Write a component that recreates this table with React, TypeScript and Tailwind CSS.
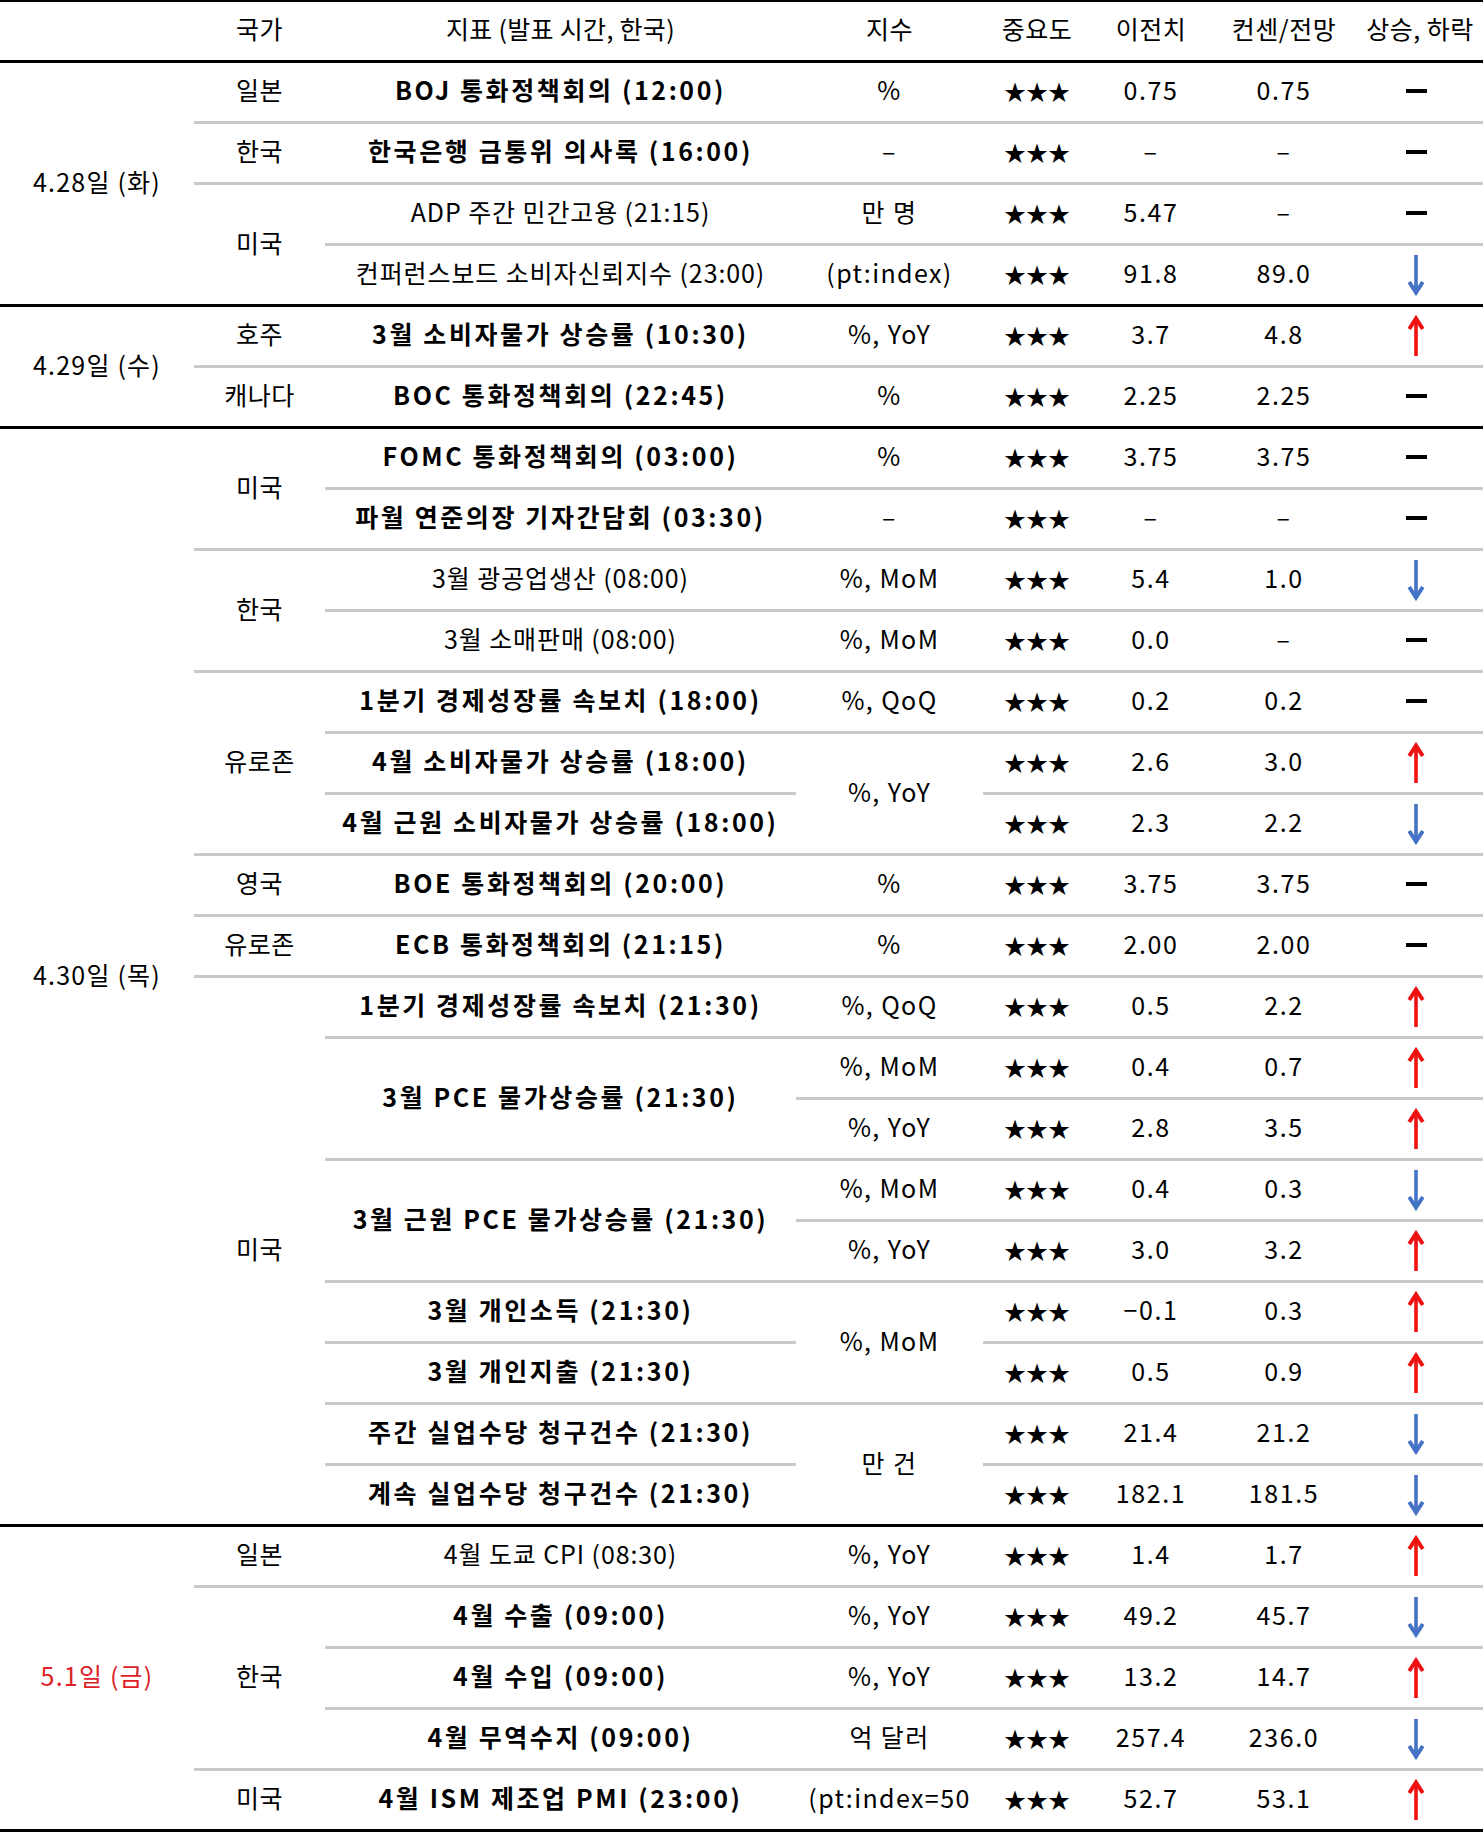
import React from "react";

type Trend = "up" | "down" | "flat";
type Row = {
  c?: [string, number];
  ind?: [string, number, boolean];
  idx?: [string, number];
  prev: string;
  cons: string;
  t: Trend;
};
type Group = { date: string; red?: boolean; rows: Row[] };

const groups: Group[] = [
  {
    date: "4.28일 (화)",
    rows: [
      { c: ["일본", 1], ind: ["BOJ 통화정책회의 (12:00)", 1, true], idx: ["%", 1], prev: "0.75", cons: "0.75", t: "flat" },
      { c: ["한국", 1], ind: ["한국은행 금통위 의사록 (16:00)", 1, true], idx: ["–", 1], prev: "–", cons: "–", t: "flat" },
      { c: ["미국", 2], ind: ["ADP 주간 민간고용 (21:15)", 1, false], idx: ["만 명", 1], prev: "5.47", cons: "–", t: "flat" },
      { ind: ["컨퍼런스보드 소비자신뢰지수 (23:00)", 1, false], idx: ["(pt:index)", 1], prev: "91.8", cons: "89.0", t: "down" },
    ],
  },
  {
    date: "4.29일 (수)",
    rows: [
      { c: ["호주", 1], ind: ["3월 소비자물가 상승률 (10:30)", 1, true], idx: ["%, YoY", 1], prev: "3.7", cons: "4.8", t: "up" },
      { c: ["캐나다", 1], ind: ["BOC 통화정책회의 (22:45)", 1, true], idx: ["%", 1], prev: "2.25", cons: "2.25", t: "flat" },
    ],
  },
  {
    date: "4.30일 (목)",
    rows: [
      { c: ["미국", 2], ind: ["FOMC 통화정책회의 (03:00)", 1, true], idx: ["%", 1], prev: "3.75", cons: "3.75", t: "flat" },
      { ind: ["파월 연준의장 기자간담회 (03:30)", 1, true], idx: ["–", 1], prev: "–", cons: "–", t: "flat" },
      { c: ["한국", 2], ind: ["3월 광공업생산 (08:00)", 1, false], idx: ["%, MoM", 1], prev: "5.4", cons: "1.0", t: "down" },
      { ind: ["3월 소매판매 (08:00)", 1, false], idx: ["%, MoM", 1], prev: "0.0", cons: "–", t: "flat" },
      { c: ["유로존", 3], ind: ["1분기 경제성장률 속보치 (18:00)", 1, true], idx: ["%, QoQ", 1], prev: "0.2", cons: "0.2", t: "flat" },
      { ind: ["4월 소비자물가 상승률 (18:00)", 1, true], idx: ["%, YoY", 2], prev: "2.6", cons: "3.0", t: "up" },
      { ind: ["4월 근원 소비자물가 상승률 (18:00)", 1, true], prev: "2.3", cons: "2.2", t: "down" },
      { c: ["영국", 1], ind: ["BOE 통화정책회의 (20:00)", 1, true], idx: ["%", 1], prev: "3.75", cons: "3.75", t: "flat" },
      { c: ["유로존", 1], ind: ["ECB 통화정책회의 (21:15)", 1, true], idx: ["%", 1], prev: "2.00", cons: "2.00", t: "flat" },
      { c: ["미국", 9], ind: ["1분기 경제성장률 속보치 (21:30)", 1, true], idx: ["%, QoQ", 1], prev: "0.5", cons: "2.2", t: "up" },
      { ind: ["3월 PCE 물가상승률 (21:30)", 2, true], idx: ["%, MoM", 1], prev: "0.4", cons: "0.7", t: "up" },
      { idx: ["%, YoY", 1], prev: "2.8", cons: "3.5", t: "up" },
      { ind: ["3월 근원 PCE 물가상승률 (21:30)", 2, true], idx: ["%, MoM", 1], prev: "0.4", cons: "0.3", t: "down" },
      { idx: ["%, YoY", 1], prev: "3.0", cons: "3.2", t: "up" },
      { ind: ["3월 개인소득 (21:30)", 1, true], idx: ["%, MoM", 2], prev: "−0.1", cons: "0.3", t: "up" },
      { ind: ["3월 개인지출 (21:30)", 1, true], prev: "0.5", cons: "0.9", t: "up" },
      { ind: ["주간 실업수당 청구건수 (21:30)", 1, true], idx: ["만 건", 2], prev: "21.4", cons: "21.2", t: "down" },
      { ind: ["계속 실업수당 청구건수 (21:30)", 1, true], prev: "182.1", cons: "181.5", t: "down" },
    ],
  },
  {
    date: "5.1일 (금)",
    red: true,
    rows: [
      { c: ["일본", 1], ind: ["4월 도쿄 CPI (08:30)", 1, false], idx: ["%, YoY", 1], prev: "1.4", cons: "1.7", t: "up" },
      { c: ["한국", 3], ind: ["4월 수출 (09:00)", 1, true], idx: ["%, YoY", 1], prev: "49.2", cons: "45.7", t: "down" },
      { ind: ["4월 수입 (09:00)", 1, true], idx: ["%, YoY", 1], prev: "13.2", cons: "14.7", t: "up" },
      { ind: ["4월 무역수지 (09:00)", 1, true], idx: ["억 달러", 1], prev: "257.4", cons: "236.0", t: "down" },
      { c: ["미국", 1], ind: ["4월 ISM 제조업 PMI (23:00)", 1, true], idx: ["(pt:index=50", 1], prev: "52.7", cons: "53.1", t: "up" },
    ],
  },
];

function Arrow({ dir }: { dir: "up" | "down" }) {
  const color = dir === "up" ? "#ee1111" : "#4472c4";
  return (
    <svg width="18" height="42" viewBox="0 0 18 42" className="inline-block">
      <g transform={dir === "up" ? "rotate(180 9 21)" : undefined}>
        <line x1="9" y1="1" x2="9" y2="37" stroke={color} strokeWidth="3.6" />
        <polyline points="2.2,28 9,38.5 15.8,28" fill="none" stroke={color} strokeWidth="4" strokeLinejoin="miter" />
      </g>
    </svg>
  );
}

function TrendCell({ t }: { t: Trend }) {
  if (t === "flat") return <div className="mx-auto h-[4px] w-[21px] -translate-y-[1px] bg-black" />;
  return (
    <div className="flex justify-center">
      <Arrow dir={t} />
    </div>
  );
}

export default function App() {
  const flat: { g: Group; r: Row; ri: number; first: boolean }[] = [];
  groups.forEach((g) => g.rows.forEach((r, ri) => flat.push({ g, r, ri, first: ri === 0 })));

  const bc = (isEnd: boolean) => (isEnd ? "border-black" : "border-[#c9c9c9]");

  return (
    <div className="w-[1483px] bg-white text-black font-['Noto_Sans_CJK_KR','Noto_Sans',sans-serif] text-[25px] leading-none">
      <div className="border-t-2 border-black">
        <table className="w-[1483px] table-fixed border-separate border-spacing-0">
          <colgroup>
            <col className="w-[194px]" />
            <col className="w-[131px]" />
            <col className="w-[471px]" />
            <col className="w-[187px]" />
            <col className="w-[108px]" />
            <col className="w-[120px]" />
            <col className="w-[146px]" />
            <col className="w-[126px]" />
          </colgroup>
          <thead>
            <tr className="h-[61px]">
              <th className="border-b-[3px] border-black p-0 font-normal"></th>
              <th className="border-b-[3px] border-black p-0 pb-[5px] font-normal tracking-[0.5px]">국가</th>
              <th className="border-b-[3px] border-black p-0 pb-[5px] font-normal tracking-[0.3px]">지표 (발표 시간, 한국)</th>
              <th className="border-b-[3px] border-black p-0 pb-[5px] font-normal tracking-[0.5px]">지수</th>
              <th className="border-b-[3px] border-black p-0 pb-[5px] font-normal tracking-[0.5px]">중요도</th>
              <th className="border-b-[3px] border-black p-0 pb-[5px] font-normal tracking-[0.5px]">이전치</th>
              <th className="border-b-[3px] border-black p-0 pb-[5px] font-normal tracking-[0.5px]">컨센/전망</th>
              <th className="border-b-[3px] border-black p-0 pb-[5px] font-normal whitespace-nowrap tracking-[0.5px]">상승, 하락</th>
            </tr>
          </thead>
          <tbody>
            {flat.map(({ g, r, ri, first }, k) => {
              const n = g.rows.length;
              const endOf = (span: number) => ri + span - 1 === n - 1;
              const lastRow = ri === n - 1;
              return (
                <tr key={k} className="h-[61px]">
                  {first && (
                    <td
                      rowSpan={n}
                      className={`border-b-[3px] border-black p-0 pb-[5px] text-center align-middle whitespace-nowrap tracking-[1.2px] ${g.red ? "text-[#dc2128]" : ""}`}
                    >
                      {g.date}
                    </td>
                  )}
                  {r.c && (
                    <td rowSpan={r.c[1]} className={`border-b-[3px] p-0 pb-[5px] text-center align-middle tracking-[0.5px] ${bc(endOf(r.c[1]))}`}>
                      {r.c[0]}
                    </td>
                  )}
                  {r.ind && (
                    <td
                      rowSpan={r.ind[1]}
                      className={`border-b-[3px] p-0 pb-[5px] text-center align-middle whitespace-nowrap ${bc(endOf(r.ind[1]))} ${
                        r.ind[2] ? "font-bold tracking-[2.6px]" : "font-normal tracking-[0.9px]"
                      }`}
                    >
                      {r.ind[0]}
                    </td>
                  )}
                  {r.idx && (
                    <td rowSpan={r.idx[1]} className={`border-b-[3px] p-0 pb-[5px] text-center align-middle whitespace-nowrap tracking-[1.4px] ${bc(endOf(r.idx[1]))}`}>
                      {r.idx[0]}
                    </td>
                  )}
                  <td className={`border-b-[3px] p-0 pb-[5px] text-center align-middle text-[22px] ${bc(lastRow)}`}>★★★</td>
                  <td className={`border-b-[3px] p-0 pb-[5px] text-center align-middle tracking-[1.6px] ${bc(lastRow)}`}>{r.prev}</td>
                  <td className={`border-b-[3px] p-0 pb-[5px] text-center align-middle tracking-[1.6px] ${bc(lastRow)}`}>{r.cons}</td>
                  <td className={`border-b-[3px] p-0 pr-[8px] text-center align-middle ${bc(lastRow)}`}>
                    <TrendCell t={r.t} />
                  </td>
                </tr>
              );
            })}
          </tbody>
        </table>
      </div>
    </div>
  );
}
